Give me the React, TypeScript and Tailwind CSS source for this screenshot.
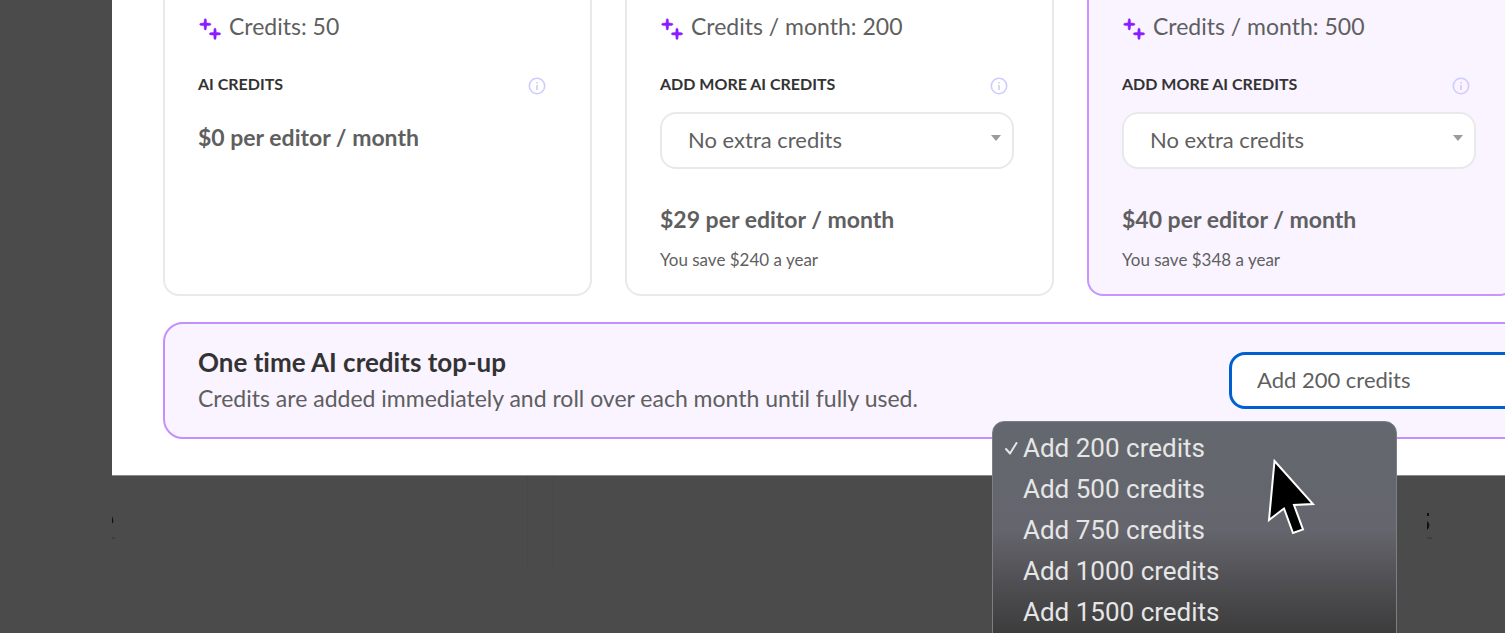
import { useState } from 'react';

interface Plan {
  credits: string;
  heading: string;
  price: string;
  saving?: string;
  extras?: boolean;
  highlighted?: boolean;
}

const plans: Plan[] = [
  { credits: 'Credits: 50', heading: 'AI CREDITS', price: '$0 per editor / month' },
  {
    credits: 'Credits / month: 200',
    heading: 'ADD MORE AI CREDITS',
    price: '$29 per editor / month',
    saving: 'You save $240 a year',
    extras: true,
  },
  {
    credits: 'Credits / month: 500',
    heading: 'ADD MORE AI CREDITS',
    price: '$40 per editor / month',
    saving: 'You save $348 a year',
    extras: true,
    highlighted: true,
  },
];

const topUps = ['Add 200 credits', 'Add 500 credits', 'Add 750 credits', 'Add 1000 credits', 'Add 1500 credits'];

function Sparkles() {
  return (
    <svg className="h-6 w-6 shrink-0 overflow-visible" viewBox="0 0 24 24" fill="#8a1cff" stroke="#8a1cff" strokeWidth=".5" aria-hidden="true">
      <path d="M7.300 4.700c.7 0 1 .5 1.100 1.500l.1 2 .3.600.600.300 2 .1c1 .1 1.500.4 1.500 1.100s-.5 1-1.500 1.100l-2 .1-.600.300-.300.600-.1 2c-.1 1-.4 1.500-1.100 1.500s-1-.5-1.100-1.500l-.1-2-.300-.600-.600-.300-2-.1c-1-.1-1.500-.4-1.500-1.100s.5-1 1.500-1.100l2-.1.600-.300.300-.600.1-2c.1-1 .4-1.500 1.100-1.500Z" />
      <path d="M17 14.200c.7 0 1 .5 1.100 1.500l.1 2 .3.600.600.300 2 .1c1 .1 1.500.4 1.500 1.100s-.5 1-1.500 1.100l-2 .1-.600.300-.300.600-.1 2c-.1 1-.4 1.500-1.100 1.500s-1-.5-1.100-1.500l-.1-2-.300-.600-.600-.300-2-.1c-1-.1-1.500-.4-1.500-1.100s.5-1 1.500-1.100l2-.1.600-.300.300-.600.1-2c.1-1 .4-1.500 1.100-1.500Z" />
    </svg>
  );
}

function InfoIcon() {
  return (
    <svg className="h-[18px] w-[18px]" viewBox="0 0 18 18" fill="none" stroke="#cfcbff" aria-hidden="true">
      <circle cx="9" cy="9" r="7.700" strokeWidth="1.600" />
      <path d="M9 8v5M9 5v1.500" strokeWidth="1.600" />
    </svg>
  );
}

function PlanCard({ plan }: { plan: Plan }) {
  return (
    <article
      className={`h-[296px] w-[429px] shrink-0 rounded-b-2xl border-2 border-t-0 pt-[10px] pr-[38px] pl-[33px] ${
        plan.highlighted ? 'border-[#c994ff] bg-[#f9f4ff]' : 'border-[#e9e9e9] bg-white'
      }`}
    >
      <p className="flex h-8 items-center gap-[7px] text-[23px]">
        <Sparkles />
        {plan.credits}
      </p>
      <div className="mt-7 flex h-7 items-center justify-between">
        <h3 className="text-base font-bold text-[#333333]">{plan.heading}</h3>
        <button type="button" aria-label="About AI credits" className="mr-[6px] pt-[3px]">
          <InfoIcon />
        </button>
      </div>
      {plan.extras && (
        <div className="relative mt-[14px]">
          <select
            aria-label="Extra credits"
            className="block h-[57px] w-full appearance-none rounded-2xl border-2 border-[#e9e9e9] bg-white pb-[3px] pl-[26px] text-[22px]"
          >
            <option>No extra credits</option>
          </select>
          <svg className="pointer-events-none absolute top-[23px] right-[13px] h-[6px] w-[10px]" viewBox="0 0 10 6" aria-hidden="true">
            <path d="M0 0h10L5 6Z" fill="#9b9b9b" />
          </svg>
        </div>
      )}
      <p className={`text-[23px] leading-8 font-bold ${plan.extras ? 'mt-[34px]' : 'mt-[23px]'}`}>{plan.price}</p>
      {plan.saving && <p className="mt-[13px] text-[17px] leading-6">{plan.saving}</p>}
    </article>
  );
}

function TopUpMenu({ value, onSelect }: { value: string; onSelect: (v: string) => void }) {
  return (
    <div
      role="listbox"
      aria-label="Top-up amount"
      className="absolute top-full -left-[237px] mt-3 flex h-[240px] w-[405px] flex-col rounded-t-xl border border-[#7c7e82] bg-linear-to-b from-[#63686e] via-[#65656d] via-45% to-[#3b3b3b] to-90% pt-[6px] font-[Roboto,sans-serif] text-[26px] text-[#e6e6e6]"
    >
      {topUps.map((option) => (
        <button
          key={option}
          type="button"
          role="option"
          aria-selected={option === value}
          onClick={() => onSelect(option)}
          className="flex h-[41px] shrink-0 items-center pl-3"
        >
          <span className="w-[18px]">
            {option === value && (
              <svg className="h-[14px] w-[13px]" viewBox="0 0 13 14" fill="none" stroke="currentColor" strokeWidth="2" strokeLinecap="round" strokeLinejoin="round">
                <path d="m1 7 4 4.500L11.500 1" />
              </svg>
            )}
          </span>
          {option}
        </button>
      ))}
      <svg className="pointer-events-none absolute top-[37px] left-[274px] h-[78px] w-[52px]" viewBox="0 0 52 78" aria-hidden="true">
        <path d="M7.500 2 46 45 27 46 36 70.500 26 74 17 49.500 2 61Z" fill="#000" stroke="#fff" strokeWidth="2" />
      </svg>
    </div>
  );
}

export default function App() {
  const [topUp, setTopUp] = useState(topUps[0]);

  return (
    <div className="h-screen overflow-hidden bg-[#4b4b4b] pl-28 font-[Lato,sans-serif] text-[#5f5f5f] [font-variant-ligatures:none]">
      <main className="w-[1916px] border-b border-[#8a8a8a] bg-white px-[51px] pb-9">
        <div className="flex gap-[33px]">
          {plans.map((plan) => (
            <PlanCard key={plan.price} plan={plan} />
          ))}
        </div>

        <section className="mt-[26px] flex h-[117px] items-center rounded-[20px] border-2 border-[#c48fff] bg-[#f9f4ff] pr-[38px] pl-[33px]">
          <div className="w-[1031px] shrink-0 pb-[2px]">
            <h2 className="text-[26px] leading-9 font-bold text-[#333333]">One time AI credits top-up</h2>
            <p className="text-[23px] leading-9">Credits are added immediately and roll over each month until fully used.</p>
          </div>
          <div className="relative flex-1">
            <select
              aria-label="One time AI credits top-up"
              value={topUp}
              onChange={(e) => setTopUp(e.target.value)}
              className="block h-[57px] w-full appearance-none rounded-2xl border-3 border-[#0060d0] bg-white pb-[3px] pl-[25px] text-[22px] outline-none"
            >
              {topUps.map((option) => (
                <option key={option}>{option}</option>
              ))}
            </select>
            <TopUpMenu value={topUp} onSelect={setTopUp} />
          </div>
        </section>
      </main>

      {/* page dimmed behind the dialog */}
      <div className="relative flex h-[92px] w-[1916px] gap-[25px] pl-[415px]" aria-hidden="true">
        <div className="w-px bg-[#474747]" />
        <div className="w-px bg-[#474747]" />
        <svg className="absolute top-9 left-0 h-7 w-1" viewBox="0 0 4 28">
          <path d="M0 4q2 4 1 7H0Z" fill="#111" />
          <path d="M0 26h3" stroke="#333" />
        </svg>
        <svg className="absolute top-9 left-[1315px] h-7 w-1.5" viewBox="0 0 6 28">
          <path d="M0 1h2v3H0ZM0 9q5 4 0 9Z" fill="#111" />
          <path d="M0 26h5" stroke="#333" />
        </svg>
      </div>
    </div>
  );
}
